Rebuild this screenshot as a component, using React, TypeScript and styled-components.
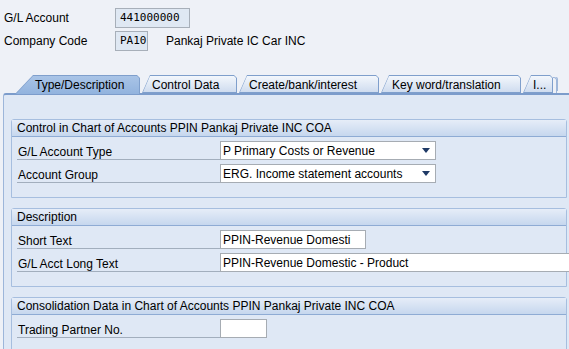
import React from 'react';
import styled, { createGlobalStyle } from 'styled-components';

const GlobalStyle = createGlobalStyle`
  html, body {
    margin: 0;
    padding: 0;
    width: 569px;
    height: 349px;
    overflow: hidden;
    background: #eef1f7;
    font-family: 'Liberation Sans', Arial, sans-serif;
    font-size: 12px;
    color: #000;
  }
`;

const tabs = [
  { label: 'Type/Description', width: 125, pad: 20, active: true },
  { label: 'Control Data', width: 95, pad: 10 },
  { label: 'Create/bank/interest', width: 140, pad: 10 },
  { label: 'Key word/translation', width: 140, pad: 11 },
  { label: 'I...', width: 30, pad: 10 },
];

export default function App() {
  return (
    <>
      <GlobalStyle />
      <Page>
        <Header>
          <HeadRow>
            <HeadLabel>G/L Account</HeadLabel>
            <ReadBox width={75}>441000000</ReadBox>
          </HeadRow>
          <HeadRow>
            <HeadLabel>Company Code</HeadLabel>
            <ReadBox width={33}>PA10</ReadBox>
            <HeadText>Pankaj Private IC Car INC</HeadText>
          </HeadRow>
        </Header>

        <TabStrip>
          {tabs.map((t) => (
            <Tab key={t.label} width={t.width} active={t.active}>
              <TabFace active={t.active} pad={t.pad}>
                {t.label}
              </TabFace>
            </Tab>
          ))}
          <MoreEdge />
        </TabStrip>

        <Panel>
          <Group>
            <GroupTitle>Control in Chart of Accounts PPIN Pankaj Private INC COA</GroupTitle>
            <Rows>
              <Row>
                <RowLabel>G/L Account Type</RowLabel>
                <Select width={216}>
                  <span>P Primary Costs or Revenue</span>
                  <Arrow />
                </Select>
              </Row>
              <Row>
                <RowLabel>Account Group</RowLabel>
                <Select width={216}>
                  <span>ERG. Income statement accounts</span>
                  <Arrow />
                </Select>
              </Row>
            </Rows>
          </Group>

          <Group>
            <GroupTitle>Description</GroupTitle>
            <Rows>
              <Row>
                <RowLabel>Short Text</RowLabel>
                <Input width={146}>PPIN-Revenue Domesti</Input>
              </Row>
              <Row>
                <RowLabel>G/L Acct Long Text</RowLabel>
                <Input width={360}>PPIN-Revenue Domestic - Product</Input>
              </Row>
            </Rows>
          </Group>

          <Group>
            <GroupTitle>Consolidation Data in Chart of Accounts PPIN Pankaj Private INC COA</GroupTitle>
            <Rows>
              <Row>
                <RowLabel>Trading Partner No.</RowLabel>
                <Input width={47} />
              </Row>
            </Rows>
          </Group>
        </Panel>
      </Page>
    </>
  );
}

const Page = styled.div`
  display: flex;
  flex-direction: column;
  height: 349px;
`;

const Header = styled.div`
  display: flex;
  flex-direction: column;
  gap: 3px;
  padding: 8px 0 0 4px;
`;

const HeadRow = styled.div`
  display: flex;
  align-items: center;
  height: 20px;
`;

const HeadLabel = styled.span`
  width: 111px;
`;

const ReadBox = styled.div<{ width: number }>`
  box-sizing: border-box;
  width: ${(p) => p.width}px;
  height: 20px;
  border: 1px solid #a7afb9;
  background: #dfe8f3;
  font-family: 'DejaVu Sans Mono', 'Liberation Mono', monospace;
  font-size: 11px;
  line-height: 18px;
  padding-left: 4px;
`;

const HeadText = styled.span`
  margin-left: 18px;
`;

const TabStrip = styled.div`
  display: flex;
  align-items: flex-end;
  gap: 2px;
  margin: 24px 0 0 15px;
  height: 18px;
  position: relative;
  z-index: 1;
`;

const Tab = styled.div<{ width: number; active?: boolean }>`
  width: ${(p) => p.width}px;
  height: ${(p) => (p.active ? 19 : 18)}px;
  margin-bottom: ${(p) => (p.active ? -1 : 0)}px;
  flex-shrink: 0;
  background: #7f9fcc;
  clip-path: polygon(
    0 100%,
    ${(p) => (p.active ? 18 : 8)}px 0,
    calc(100% - 3px) 0,
    100% 3px,
    100% 100%
  );
  display: flex;
`;

const TabFace = styled.div<{ active?: boolean; pad: number }>`
  flex: 1;
  margin: 1px 1px ${(p) => (p.active ? 0 : 1)}px 1px;
  padding-left: ${(p) => p.pad - 1}px;
  line-height: 18px;
  white-space: nowrap;
  overflow: hidden;
  background: ${(p) =>
    p.active
      ? 'linear-gradient(#a9c4e7, #92b3de)'
      : 'linear-gradient(#f3f7fc, #cfdcef)'};
  clip-path: polygon(
    0 100%,
    ${(p) => (p.active ? 17 : 7)}px 0,
    calc(100% - 2px) 0,
    100% 2px,
    100% 100%
  );
`;

const MoreEdge = styled.div`
  width: 3px;
  height: 15px;
  margin-left: -2px;
  border: 1px solid #9fb7da;
  border-left: none;
  border-bottom: none;
  border-radius: 0 3px 0 0;
  box-shadow: 2px -1px 0 -1px #9fb7da;
`;

const Panel = styled.div`
  flex: 1;
  margin-left: 3px;
  border-top: 2px solid #7c9ccb;
  border-left: 1px solid #9db6da;
  border-top-left-radius: 3px;
  background: #dfe8f5;
  padding: 24px 2px 0 7px;
  display: flex;
  flex-direction: column;
  gap: 10px;
`;

const Group = styled.div`
  border: 1px solid #a6bedf;
  border-radius: 3px 3px 0 0;
  padding-bottom: 14px;
`;

const GroupTitle = styled.div`
  height: 16px;
  line-height: 17px;
  padding-left: 5px;
  background: linear-gradient(#e6edf8, #c6d7ee);
  border-bottom: 1px solid #8eabd4;
  white-space: nowrap;
`;

const Rows = styled.div`
  display: flex;
  flex-direction: column;
  gap: 1px;
  padding: 1px 0 0 5px;
`;

const Row = styled.div`
  display: grid;
  grid-template-columns: 203px 1fr;
  height: 22px;
  align-items: end;
`;

const RowLabel = styled.div`
  height: 14px;
  padding: 7px 0 0 1px;
  line-height: 14px;
  border-bottom: 1px solid #a2aebd;
`;

const Input = styled.div<{ width: number }>`
  box-sizing: border-box;
  width: ${(p) => p.width}px;
  height: 19px;
  border: 1px solid #a6acb3;
  background: #fff;
  line-height: 18px;
  padding-left: 2px;
  white-space: nowrap;
`;

const Select = styled(Input)`
  display: flex;
  justify-content: space-between;
  align-items: center;
  padding-right: 5px;
`;

const Arrow = styled.span`
  width: 0;
  height: 0;
  border-left: 4px solid transparent;
  border-right: 4px solid transparent;
  border-top: 5px solid #1f3a66;
`;
